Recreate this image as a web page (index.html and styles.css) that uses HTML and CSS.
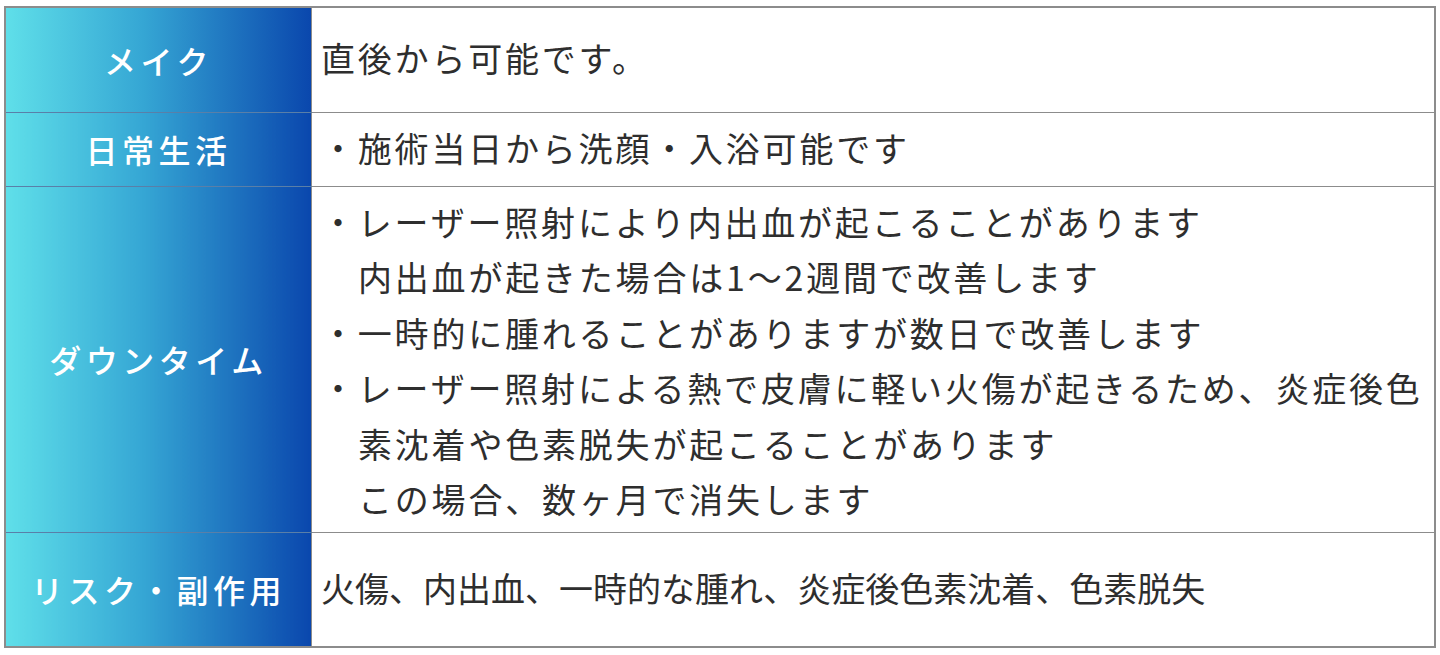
FILE: index.html
```html
<!DOCTYPE html>
<html lang="ja">
<head>
<meta charset="utf-8">
<link rel="stylesheet" href="styles.css">
</head>
<body>
<table class="info">
  <tr class="r1">
    <th>メイク</th>
    <td>直後から可能です。</td>
  </tr>
  <tr class="r2">
    <th>日常生活</th>
    <td>・施術当日から洗顔・入浴可能です</td>
  </tr>
  <tr class="r3">
    <th>ダウンタイム</th>
    <td>
      <p class="item">・レーザー照射により内出血が起こることがあります<br>内出血が起きた場合は1～2週間で改善します</p>
      <p class="item">・一時的に腫れることがありますが数日で改善します</p>
      <p class="item">・レーザー照射による熱で皮膚に軽い火傷が起きるため、炎症後色<br>素沈着や色素脱失が起こることがあります<br>この場合、数ヶ月で消失します</p>
    </td>
  </tr>
  <tr class="r4">
    <th>リスク・副作用</th>
    <td>火傷、内出血、一時的な腫れ、炎症後色素沈着、色素脱失</td>
  </tr>
</table>
</body>
</html>
```

FILE: styles.css
```css
html, body {
  margin: 0;
  background: #ffffff;
}
body {
  padding: 6px 4px;
  font-family: "Noto Sans CJK JP", "Noto Sans", sans-serif;
}
.info {
  width: 1432px;
  border-collapse: collapse;
  table-layout: fixed;
  border: 2px solid #8c8c8c;
}
.info th {
  width: 305px;
  padding: 0;
  background: linear-gradient(to right, #5fdfe9 0%, #35a6d4 45%, #0a47ad 100%);
  color: #ffffff;
  font-weight: 500;
  font-size: 32px;
  letter-spacing: 4.5px;
  text-align: center;
  vertical-align: middle;
  border-bottom: 1px solid #5a7fa8;
}
.info td {
  padding: 0 0 4px 9px;
  color: #2e2e2e;
  font-size: 34px;
  letter-spacing: 2.8px;
  vertical-align: middle;
  border-bottom: 1px solid #8c8c8c;
  border-left: 1px solid #8c8c8c;
}
.r1 { height: 105px; }
.r2 { height: 74px; }
.r3 { height: 346px; }
.r4 { height: 115px; }
.r4 td { letter-spacing: 0; }
.item {
  margin: 0;
  line-height: 55.5px;
  padding-left: 37px;
  text-indent: -37px;
}
.r3 td {
  padding-top: 2px;
  padding-bottom: 0;
}
```
